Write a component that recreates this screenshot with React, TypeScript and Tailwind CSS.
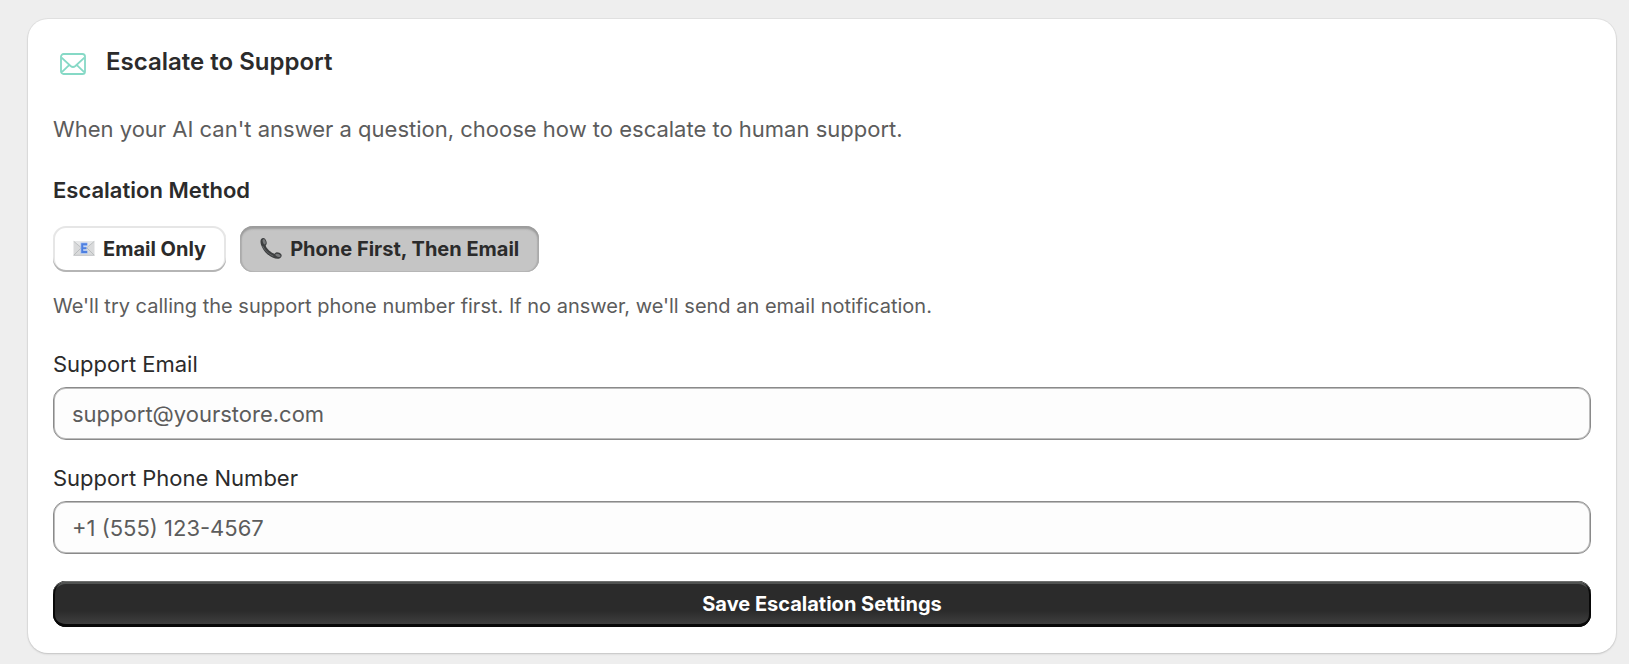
import { useState } from 'react';
import type { ReactNode } from 'react';
import clsx from 'clsx';

type Method = 'email' | 'phone';

function EnvelopeIcon() {
  return (
    <svg
      width="26"
      height="22"
      viewBox="0 0 26 22"
      fill="none"
      stroke="#86d9c6"
      strokeWidth="1.8"
      strokeLinejoin="round"
      aria-hidden="true"
    >
      <rect x="1" y="1" width="24" height="20" rx="2.6" />
      <path d="M1.6 4.6 L10.6 13 Q13 15 15.4 13 L24.4 4.6" />
      <path d="M1.8 19.2 L9.4 11.8 M24.2 19.2 L16.6 11.8" />
    </svg>
  );
}

function EmailGlyph() {
  return (
    <svg width="22" height="22" viewBox="0 0 22 22" aria-hidden="true">
      <rect x="0.5" y="3" width="21" height="14.5" rx="0.8" fill="#d9dadb" />
      <path d="M0.5 3.6 L11 12 L21.5 3.6 V3 H0.5 Z" fill="#e6e7e8" />
      <path d="M0.8 3.4 L11 12 L21.2 3.4 M0.8 17.2 L8 10 M21.2 17.2 L14 10" fill="none" stroke="#b4b6b8" strokeWidth="0.8" />
      <path d="M0.5 17.3 H21.5" stroke="#b9babc" strokeWidth="0.8" />
      <path
        d="M14.4 6.2 H9.2 V14 H14.4 M9.2 10.1 H13.6"
        fill="none"
        stroke="#a9c4f5"
        strokeWidth="3.4"
      />
      <path
        d="M14.2 6.2 H9.2 V14 H14.2 M9.2 10.1 H13.4"
        fill="none"
        stroke="#4d7fe0"
        strokeWidth="1.9"
      />
    </svg>
  );
}

function PhoneGlyph() {
  return (
    <svg width="22" height="22" viewBox="0 0 22 22" aria-hidden="true">
      <path
        d="M1 1.2 C2.2 -0.2 4.2 -0.2 5.2 1 C6.4 2.6 7 4.6 6.6 6 C6.3 7 5.6 7.2 5.8 8 C7 11 10.6 14.2 13.8 15.6 C14.8 16 15 14.8 16.2 14.4 C17.8 14 20.4 15 21.4 16.4 C22.2 18 21 20 19.4 20.6 C16 21.6 10.6 19.2 6.6 15.4 C2.4 11.4 -0.8 4.2 1 1.2 Z"
        fill="#3d3f40"
      />
      <ellipse cx="4.2" cy="3.8" rx="1.4" ry="2.8" transform="rotate(-20 4.2 3.8)" fill="#77797a" />
      <ellipse cx="18" cy="17.4" rx="2.8" ry="1.4" transform="rotate(20 18 17.4)" fill="#77797a" />
      <path d="M2.6 8 C4.6 12.2 8.6 16 13.4 18.2" fill="none" stroke="#686a6b" strokeWidth="0.9" />
    </svg>
  );
}

interface MethodButtonProps {
  pressed: boolean;
  onClick: () => void;
  icon: ReactNode;
  children: ReactNode;
}

function MethodButton({ pressed, onClick, icon, children }: MethodButtonProps) {
  return (
    <button
      type="button"
      aria-pressed={pressed}
      onClick={onClick}
      className={clsx(
        'flex h-[46px] items-center gap-2 rounded-[13px] px-5 text-xl font-bold text-[#2b2b2b]',
        pressed
          ? 'bg-[#c5c5c5] shadow-[inset_0_3px_2px_#9c9c9c,inset_2px_0_1px_#b0b0b0,inset_-2px_0_1px_#b0b0b0,inset_0_-1px_0_#b8b8b8]'
          : 'bg-white shadow-[inset_0_-2px_0_#b5b5b5,inset_0_0_0_2px_#e6e6e6]',
      )}
    >
      {icon}
      {children}
    </button>
  );
}

interface FieldProps {
  id: string;
  label: string;
  type: string;
  placeholder: string;
  value: string;
  onChange: (value: string) => void;
}

function Field({ id, label, type, placeholder, value, onChange }: FieldProps) {
  return (
    <div className="flex flex-col gap-[9px]">
      <label htmlFor={id} className="text-[22px] leading-7 text-[#2b2b2b]">
        {label}
      </label>
      <input
        id={id}
        type={type}
        placeholder={placeholder}
        value={value}
        onChange={(e) => onChange(e.target.value)}
        className="h-[53px] w-full rounded-[13px] border border-[#8a8a8a] bg-[#fdfdfd] px-[18px] text-[22px] text-[#2b2b2b] shadow-[inset_0_0_0_1px_#bcbcbc] placeholder:text-[#5c5c5c]"
      />
    </div>
  );
}

export default function App() {
  const [method, setMethod] = useState<Method>('phone');
  const [email, setEmail] = useState('');
  const [phone, setPhone] = useState('');

  return (
    <main className="min-h-screen bg-[#eeeeee] pt-[19px] pr-[13px] pb-2 pl-7 font-['Inter',sans-serif]">
      <section className="rounded-[20px] bg-white px-[25px] pt-[25px] pb-[26px] shadow-[0_1px_2px_#c4c4c4,0_0_0_1px_#e2e2e2]">
        {/* Title */}
        <div className="flex items-center gap-5 pl-[7px]">
          <span className="pt-1">
            <EnvelopeIcon />
          </span>
          <h2 className="text-2xl leading-9 font-semibold text-[#2b2b2b]">Escalate to Support</h2>
        </div>

        <p className="mt-[35px] text-[22px] leading-7 text-[#5c5c5c]">
          When your AI can't answer a question, choose how to escalate to human support.
        </p>

        {/* Escalation method */}
        <h3 className="mt-[33px] text-[22px] leading-7 font-semibold text-[#2b2b2b]">Escalation Method</h3>
        <div className="mt-[22px] flex gap-[14px]">
          <MethodButton pressed={method === 'email'} onClick={() => setMethod('email')} icon={<EmailGlyph />}>
            Email Only
          </MethodButton>
          <MethodButton pressed={method === 'phone'} onClick={() => setMethod('phone')} icon={<PhoneGlyph />}>
            Phone First, Then Email
          </MethodButton>
        </div>
        <p className="mt-5 text-xl leading-7 text-[#5c5c5c]">
          {method === 'phone'
            ? "We'll try calling the support phone number first. If no answer, we'll send an email notification."
            : "We'll send an email notification to your support address."}
        </p>

        {/* Contact details */}
        <div className="mt-[30px] flex flex-col gap-6">
          <Field
            id="support-email"
            label="Support Email"
            type="email"
            placeholder="support@yourstore.com"
            value={email}
            onChange={setEmail}
          />
          <Field
            id="support-phone"
            label="Support Phone Number"
            type="tel"
            placeholder="+1 (555) 123-4567"
            value={phone}
            onChange={setPhone}
          />
        </div>

        <button
          type="button"
          className="mt-[27px] h-[46px] w-full rounded-[13px] bg-linear-to-b from-[#2b2b2b] from-65% to-[#444444] text-xl font-bold text-white shadow-[inset_0_1px_0_#6f706f,inset_0_-3px_0_#080808,inset_2px_0_0_#080808,inset_-2px_0_0_#080808,inset_0_3px_0_#505251]"
        >
          Save Escalation Settings
        </button>
      </section>
    </main>
  );
}
